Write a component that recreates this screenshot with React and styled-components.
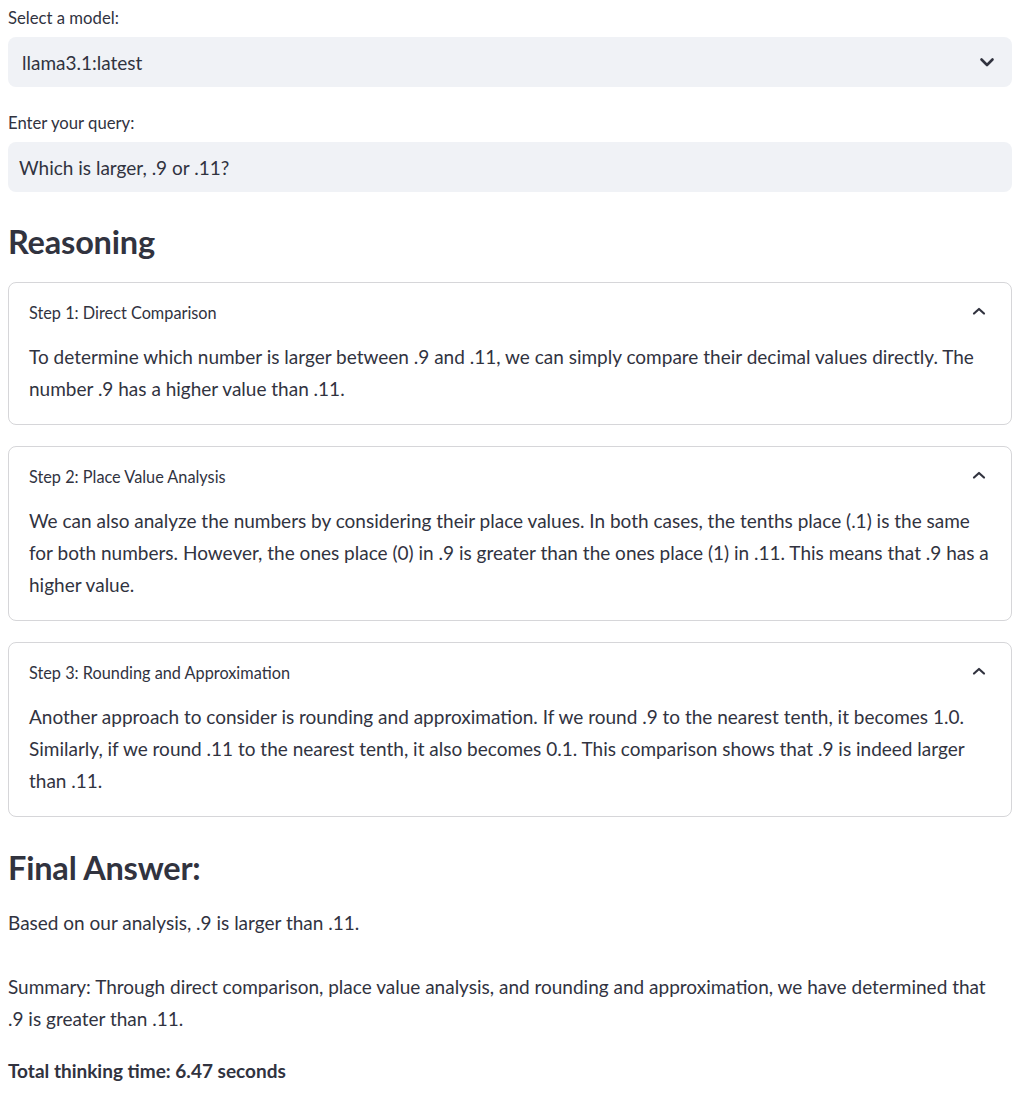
import React from "react";
import styled, { createGlobalStyle } from "styled-components";

const GlobalStyle = createGlobalStyle`
  html, body { margin: 0; padding: 0; background: #ffffff; }
  body {
    font-family: "Lato", "Noto Sans", sans-serif;
    color: #31333f;
    -webkit-font-smoothing: antialiased;
  }
`;

const Page = styled.main`
  padding: 0 8px;
  display: flex;
  flex-direction: column;
`;

const Field = styled.div`
  display: flex;
  flex-direction: column;
  margin-top: ${(p) => p.$top}px;
`;

const Label = styled.label`
  font-size: 16.7px;
  line-height: 22px;
  margin-bottom: 8px;
  color: #31333f;
`;

const Box = styled.div`
  height: 50px;
  background: #f0f2f6;
  border-radius: 8px;
  display: flex;
  align-items: center;
  justify-content: space-between;
  padding: 0 13px 0 ${(p) => p.$padLeft}px;
  box-sizing: border-box;
  font-size: 19px;
  color: #31333f;
`;

const IconSlot = styled.span`
  display: flex;
  align-items: center;
  justify-content: center;
  width: ${(p) => p.$size}px;
  height: ${(p) => p.$size}px;
  color: #31333f;
`;

const Heading = styled.h3`
  margin: ${(p) => p.$top}px 0 0 0;
  font-size: 32.5px;
  font-weight: 700;
  line-height: 40px;
  color: #31333f;
  letter-spacing: -0.2px;
`;

const Expander = styled.section`
  margin-top: ${(p) => p.$top}px;
  border: 1px solid rgba(49, 51, 63, 0.2);
  border-radius: 8px;
  display: flex;
  flex-direction: column;
`;

const Summary = styled.div`
  display: flex;
  align-items: center;
  justify-content: space-between;
  padding: 16px 22px 0 20px;
  height: 26px;
  font-size: 16.3px;
  color: #31333f;
`;

const Body = styled.div`
  padding: 16px 20px 19px 20px;
`;

const Paragraph = styled.p`
  margin: ${(p) => p.$top || 0}px 0 0 0;
  max-width: 994px;
  font-size: 19px;
  line-height: 32px;
  color: #31333f;
`;

const Strong = styled.p`
  margin: ${(p) => p.$top}px 0 0 0;
  font-size: 19px;
  line-height: 32px;
  font-weight: 700;
  color: #31333f;
`;

const ChevronDown = () => (
  <svg width="24" height="24" viewBox="0 0 24 24" fill="none">
    <path d="M6.5 9.5L12 15L17.5 9.5" stroke="currentColor" strokeWidth="2.6" strokeLinecap="round" strokeLinejoin="round" />
  </svg>
);

const ChevronUp = () => (
  <svg width="20" height="20" viewBox="0 0 20 20" fill="none">
    <path d="M5 11.5L10 7L15 11.5" stroke="currentColor" strokeWidth="2.2" strokeLinecap="round" strokeLinejoin="round" />
  </svg>
);

const steps = [
  {
    title: "Step 1: Direct Comparison",
    text: "To determine which number is larger between .9 and .11, we can simply compare their decimal values directly. The number .9 has a higher value than .11.",
  },
  {
    title: "Step 2: Place Value Analysis",
    text: "We can also analyze the numbers by considering their place values. In both cases, the tenths place (.1) is the same for both numbers. However, the ones place (0) in .9 is greater than the ones place (1) in .11. This means that .9 has a higher value.",
  },
  {
    title: "Step 3: Rounding and Approximation",
    text: "Another approach to consider is rounding and approximation. If we round .9 to the nearest tenth, it becomes 1.0. Similarly, if we round .11 to the nearest tenth, it also becomes 0.1. This comparison shows that .9 is indeed larger than .11.",
  },
];

export default function App() {
  return (
    <>
      <GlobalStyle />
      <Page>
        <Field $top={7}>
          <Label>Select a model:</Label>
          <Box $padLeft={14}>
            <span>llama3.1:latest</span>
            <IconSlot $size={24}>
              <ChevronDown />
            </IconSlot>
          </Box>
        </Field>
        <Field $top={25}>
          <Label>Enter your query:</Label>
          <Box $padLeft={11}>
            <span>Which is larger, .9 or .11?</span>
          </Box>
        </Field>

        <Heading $top={30}>Reasoning</Heading>

        {steps.map((s, i) => (
          <Expander key={s.title} $top={i === 0 ? 20 : 21}>
            <Summary>
              <span>{s.title}</span>
              <IconSlot $size={20}>
                <ChevronUp />
              </IconSlot>
            </Summary>
            <Body>
              <Paragraph>{s.text}</Paragraph>
            </Body>
          </Expander>
        ))}

        <Heading $top={31}>Final Answer:</Heading>
        <Paragraph $top={19}>Based on our analysis, .9 is larger than .11.</Paragraph>
        <Paragraph $top={32}>
          Summary: Through direct comparison, place value analysis, and rounding and approximation, we have determined that .9 is greater than .11.
        </Paragraph>
        <Strong $top={20}>Total thinking time: 6.47 seconds</Strong>
      </Page>
    </>
  );
}
